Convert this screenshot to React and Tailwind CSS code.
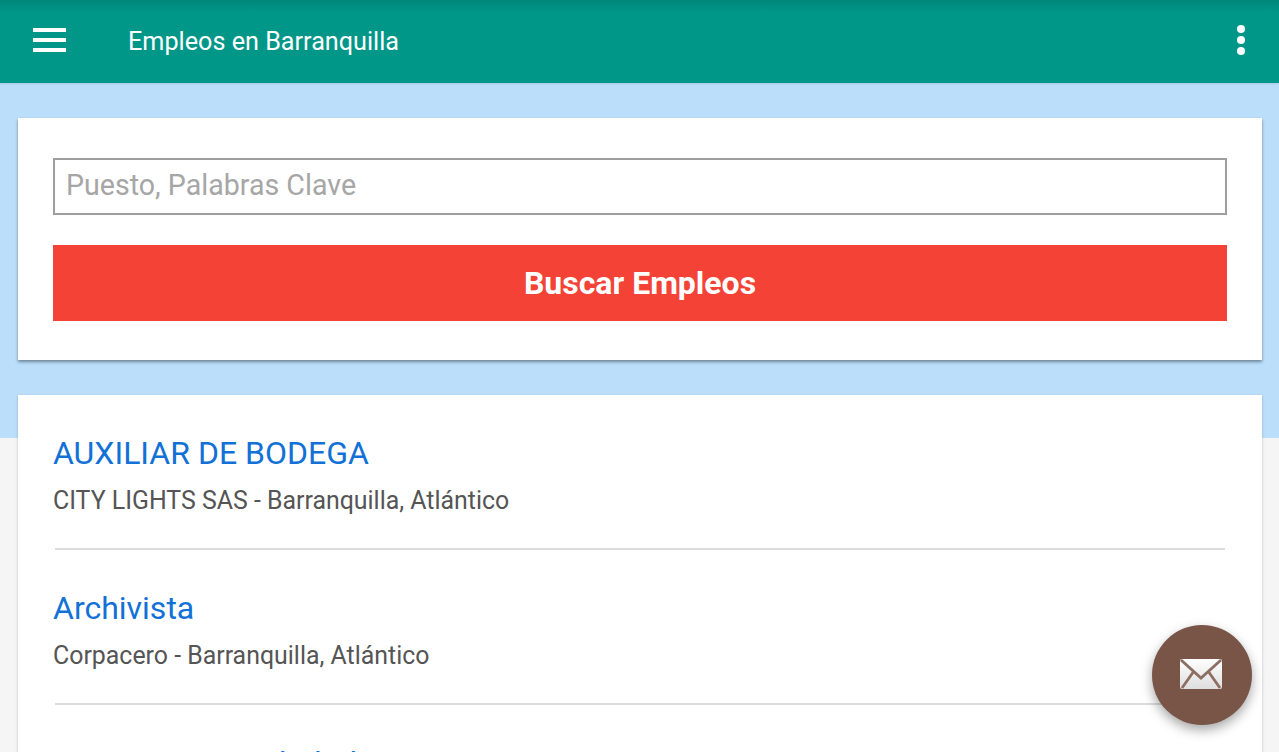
const JOBS = [
  { title: 'AUXILIAR DE BODEGA', place: 'CITY LIGHTS SAS - Barranquilla, Atlántico' },
  { title: 'Archivista', place: 'Corpacero - Barranquilla, Atlántico' },
  { title: 'Operarios en Soledad', place: 'Metalicas - Soledad, Atlántico' },
]

export default function App() {
  return (
    <div className="relative h-[752px] overflow-hidden bg-[linear-gradient(#bbdefb_438px,#f5f5f5_438px)] font-['Roboto',sans-serif]">
      <header className="flex h-[83px] items-center bg-[linear-gradient(#00877a,#009688_12px)] pl-[33px] pr-[34px] shadow-[0_1px_2px_rgba(0,0,0,0.1)]">
        <div className="mb-[3px] flex w-[95px] flex-col gap-[6px]">
          <div className="h-[4px] w-[33px] bg-white" />
          <div className="h-[4px] w-[33px] bg-white" />
          <div className="h-[4px] w-[33px] bg-white" />
        </div>
        <h1 className="flex-1 text-[25.2px] text-white">Empleos en Barranquilla</h1>
        <div className="mb-[3px] flex flex-col gap-[3px]">
          <div className="h-[8px] w-[8px] rounded-full bg-white" />
          <div className="h-[8px] w-[8px] rounded-full bg-white" />
          <div className="h-[8px] w-[8px] rounded-full bg-white" />
        </div>
      </header>

      <main className="pl-[18px] pr-[17px] pt-[35px]">
        <section className="flex flex-col gap-[30px] bg-white px-[35px] pb-[39px] pt-[40px] shadow-[0_2px_3px_rgba(0,0,0,0.4)]">
          <div className="flex h-[57px] items-center border-2 border-[#9e9e9e] px-[11px] pb-[2px] text-[28.6px] text-[#a6a6a6]">
            Puesto, Palabras Clave
          </div>
          <button className="h-[76px] bg-[#f44336] text-[32px] font-bold text-white">Buscar Empleos</button>
        </section>

        <section className="mt-[35px] bg-white px-[37px] shadow-[0_1px_3px_rgba(0,0,0,0.2)]">
          {JOBS.map(job => (
            <div key={job.title} className="border-b-2 border-[#dcdcdc] pb-[31px] pt-[38px]">
              <h2 className="mb-[12px] ml-[-2px] text-[32px] leading-[40px] text-[#1271d6]">{job.title}</h2>
              <p className="ml-[-2px] text-[24.9px] leading-[32px] text-[#555]">{job.place}</p>
            </div>
          ))}
        </section>
      </main>

      {/* mail button */}
      <button className="absolute left-[1152px] top-[625px] flex h-[100px] w-[100px] items-center justify-center rounded-full bg-[#795548] shadow-[0_5px_12px_rgba(0,0,0,0.35)]">
        <svg className="mb-[2px] mr-[2px]" width="42" height="30" viewBox="0 0 42 30">
          <defs>
            <linearGradient id="env" x1="0" y1="0" x2="0" y2="1">
              <stop offset="0" stopColor="#ffffff" />
              <stop offset="1" stopColor="#dedede" />
            </linearGradient>
          </defs>
          <rect width="42" height="30" rx="2" fill="url(#env)" />
          <path d="M1 1 L21 19 L41 1 M2 29 L14 12 M40 29 L28 12" fill="none" stroke="#8d6e63" strokeWidth="2.8" />
        </svg>
      </button>
    </div>
  )
}
